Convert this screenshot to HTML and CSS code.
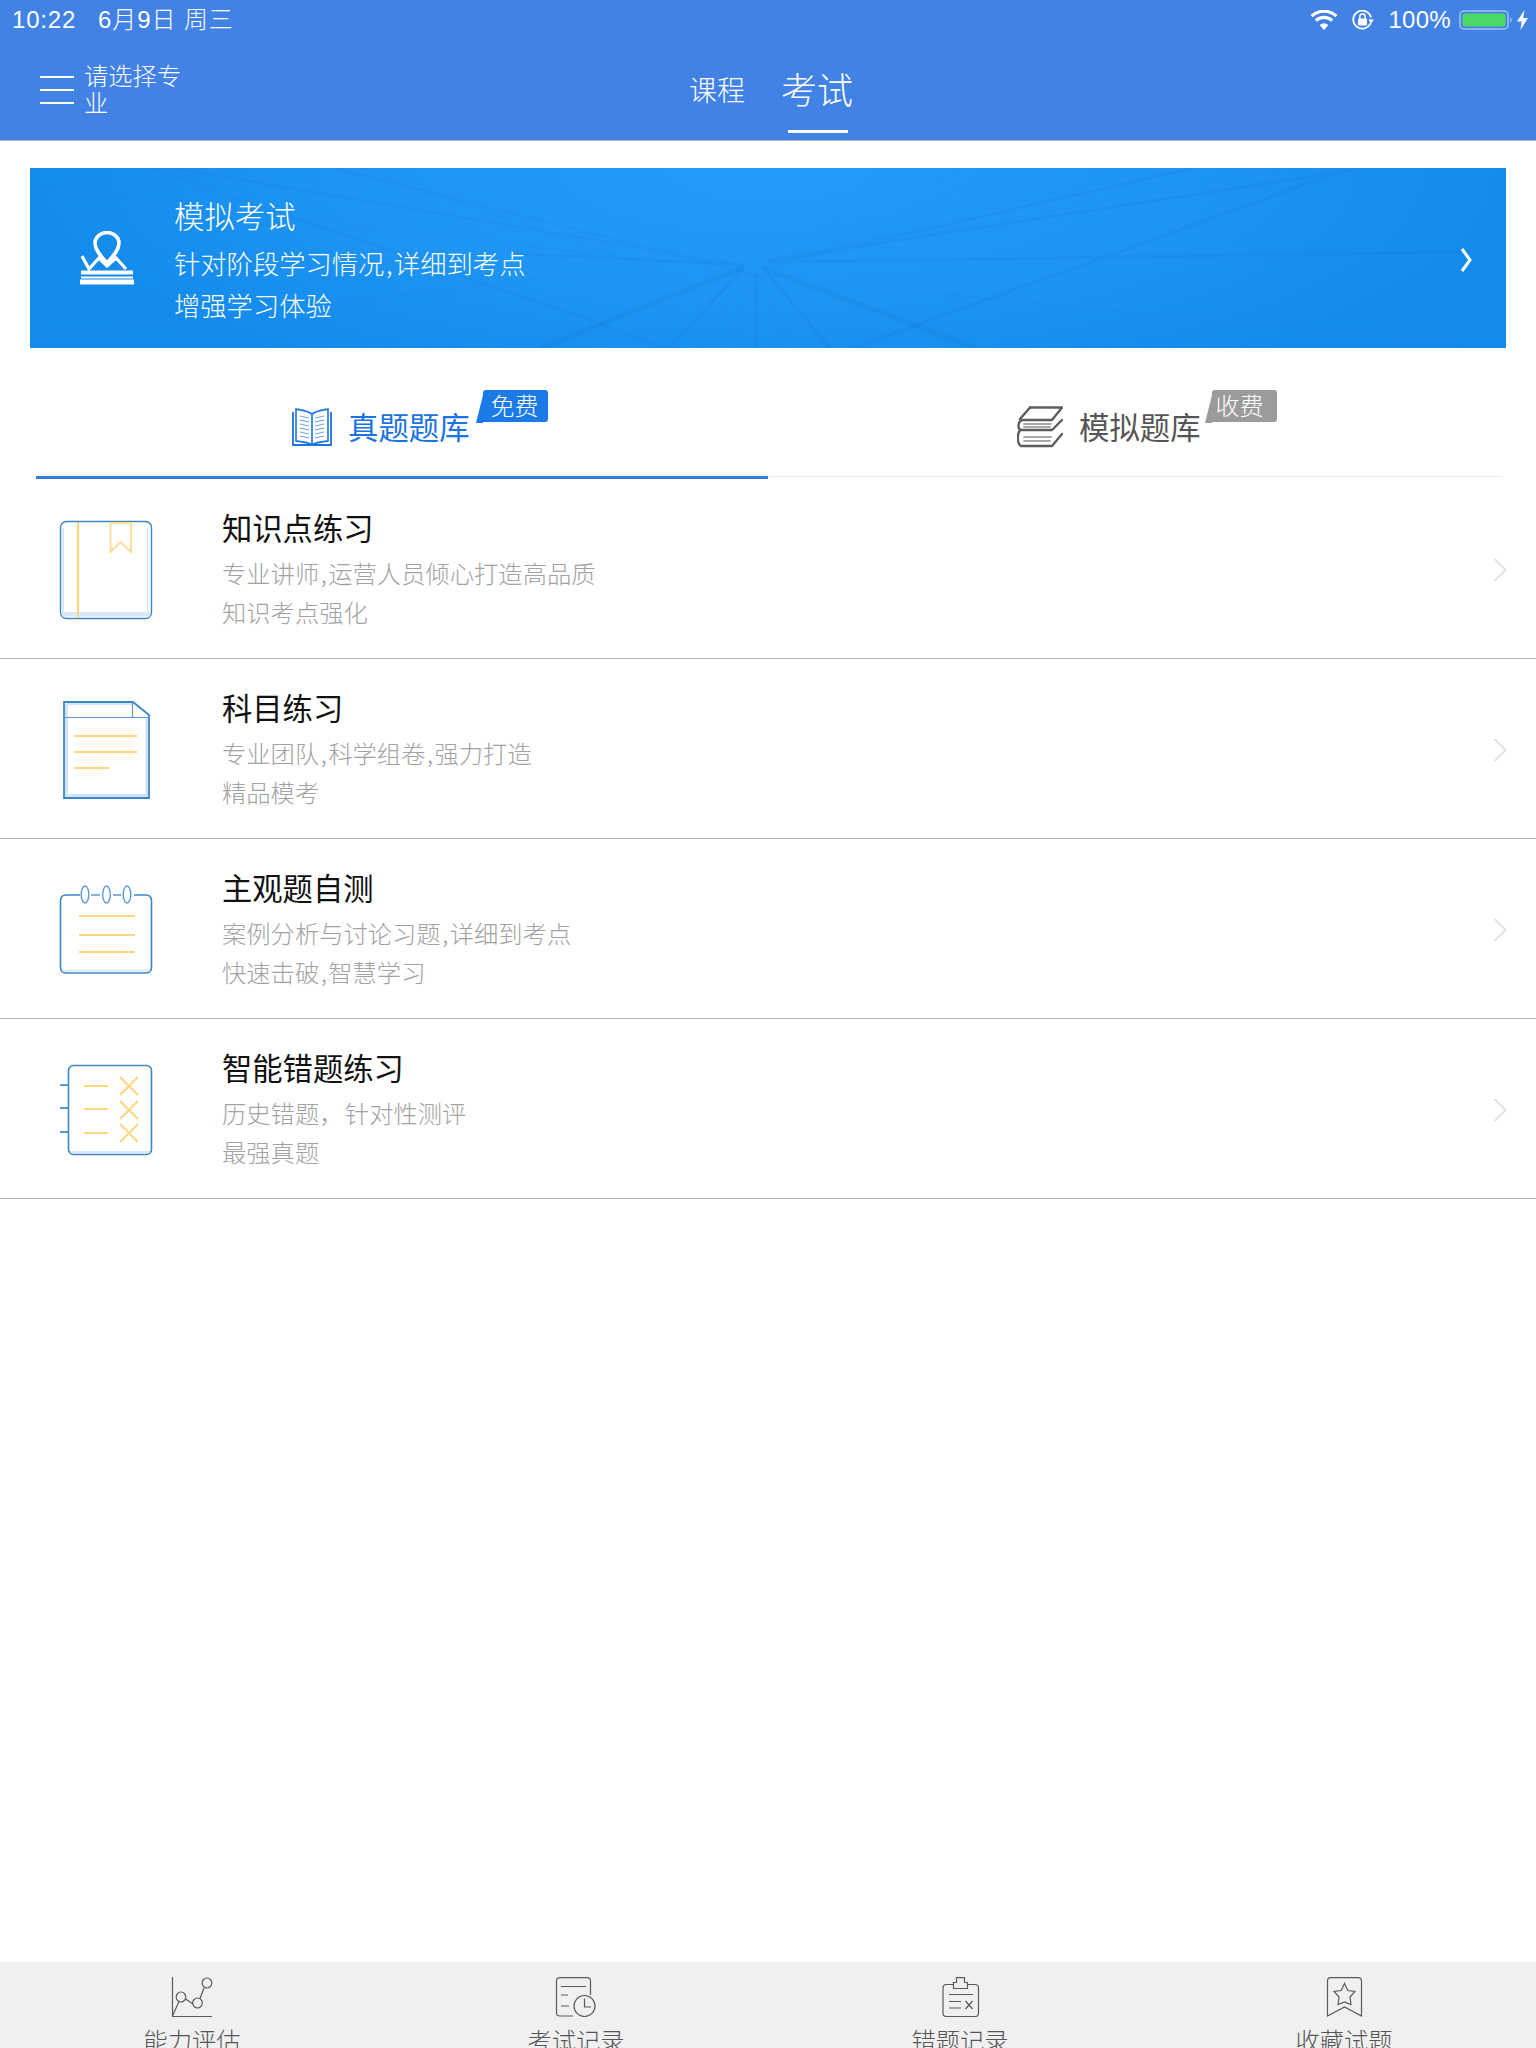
FILE: index.html
```html
<!DOCTYPE html>
<html lang="zh-CN">
<head>
<meta charset="utf-8">
<title>考试</title>
<link rel="stylesheet" href="styles.css">
</head>
<body>
<div class="app">
  <header class="topbar">
    <div class="status">
      <div class="status-left"><span class="time">10:22</span><span class="date">6月9日 周三</span></div>
      <div class="status-right">
        <svg class="wifi" viewBox="0 0 28 20"><path d="M14 20 L9.6 15 A7 7 0 0 1 18.4 15Z" fill="#fff"/><path d="M5.8 10.6 A12 12 0 0 1 22.2 10.6" fill="none" stroke="#fff" stroke-width="3.2"/><path d="M1.6 6.2 A18 18 0 0 1 26.4 6.2" fill="none" stroke="#fff" stroke-width="3.2"/></svg>
        <svg class="lock" viewBox="0 0 22 20"><path d="M18.6 13 A9 9 0 1 1 19 7.5" fill="none" stroke="#fff" stroke-width="1.8"/><path d="M16.4 9.5 H22 L19 13.5Z" fill="#fff"/><rect x="6" y="8.6" width="9" height="7" rx="1" fill="#fff"/><path d="M7.8 9 V6.8 A2.7 2.7 0 0 1 13.2 6.8 V9" fill="none" stroke="#fff" stroke-width="1.5"/></svg>
        <span class="percent">100%</span>
        <svg class="battery" viewBox="0 0 53 20"><rect x="1" y="1" width="48" height="18" rx="4" fill="none" stroke="#8bb0ee" stroke-width="2"/><rect x="3.5" y="3.5" width="43" height="13" rx="2" fill="#4cd964"/><path d="M51 7 Q53 8 53 10 Q53 12 51 13Z" fill="#8bb0ee"/></svg>
        <svg class="bolt" viewBox="0 0 11 20"><path d="M7.5 0 L0 11.5 H4.6 L3.4 20 L11 8 H6.2Z" fill="#fff"/></svg>
      </div>
    </div>
    <nav class="nav">
      <div class="nav-left">
        <span class="menu-icon"><i></i><i></i><i></i></span>
        <span class="major">请选择专业</span>
      </div>
      <div class="nav-tabs">
        <span class="nav-tab">课程</span>
        <span class="nav-tab active">考试</span>
      </div>
    </nav>
  </header>

  <section class="banner">
    <svg class="banner-art" viewBox="0 0 1476 180" preserveAspectRatio="none">
      <g fill="none" stroke="#0b6fc9">
        <path d="M142 0 L700 95 M303 0 L730 108 M120 0 L568 155 L634 180" stroke-opacity=".09" stroke-width="2"/>
        <path d="M480 85 L714 97 M738 94 L1440 84 M738 92 L1324 2 M823 180 L1315 2 M748 95 L1164 0" stroke-opacity=".1" stroke-width="3"/>
        <path d="M511 180 L714 99 M946 180 L733 100" stroke-opacity=".14" stroke-width="5"/>
        <path d="M726 107 V180 M714 99 L640 180 M733 100 L800 180" stroke-opacity=".1" stroke-width="3"/>
        <path d="M748 95 L880 0 M748 95 L930 0 M748 95 L980 0 M748 95 L1030 0 M748 95 L1080 0 M748 95 L1120 0 M748 95 L1250 0 M720 105 L670 180 M726 105 L700 180 M730 105 L760 180 M640 95 L0 20 M650 110 L330 0 M850 120 L1476 180 M600 100 L0 170" stroke-opacity=".05" stroke-width="1.5"/>
      </g>
    </svg>
    <svg class="banner-icon" viewBox="0 0 54 54">
      <path d="M27 32 C22 26 15 20 15 12 A12 10.500 0 0 1 39 12 C39 20 32 26 27 32Z" fill="none" stroke="#fff" stroke-width="3.600"/>
      <path d="M2 25 L9 38 L19 27 L27 35 L36 27 L46 38" fill="none" stroke="#fff" stroke-width="3.200"/>
      <path d="M1 41.500 H53" stroke="#fff" stroke-width="4"/>
      <path d="M1 46.500 H53" stroke="#fff" stroke-width="2"/>
      <path d="M0 51 H54" stroke="#fff" stroke-width="5"/>
    </svg>
    <div class="banner-text">
      <h2 class="banner-title">模拟考试</h2>
      <p class="banner-line">针对阶段学习情况<span class="comma">,</span>详细到考点</p>
      <p class="banner-line">增强学习体验</p>
    </div>
    <svg class="banner-arrow" viewBox="0 0 14 24"><path d="M3 1 L11 12 L3 23" fill="none" stroke="#fff" stroke-width="3"/></svg>
  </section>

  <div class="bank-tabs">
    <div class="bank-tab current">
      <svg class="bank-icon-a" viewBox="0 0 40 38" fill="none" stroke="#1a73e0"><path d="M1 4 V37 H39 V4" stroke-width="1.8"/><path d="M20 6 C16 3 9 2 4 1 V33 C9 33.500 16 34 20 37 C24 34 31 33.500 36 33 V1 C31 2 24 3 20 6Z M20 6 V37" stroke-width="1.6" fill="#fff"/><path d="M8 8 L17 10 M8 12 L17 14 M8 16 L17 18 M8 20 L17 22 M8 24 L17 26 M8 28 L17 30 M32 8 L23 10 M32 12 L23 14 M32 16 L23 18 M32 20 L23 22 M32 24 L23 26 M32 28 L23 30" stroke-width="1" stroke-opacity=".65"/></svg>
      <span class="bank-label">真题题库<span class="badge free">免费</span></span>
    </div>
    <div class="bank-tab other">
      <svg class="bank-icon-b" viewBox="0 0 46 42" fill="none" stroke="#5d5d5d" stroke-width="2.4" stroke-linecap="round" stroke-linejoin="round"><path d="M13 1.500 H45 L35 14 H6 C1 14 0 23 4 24 H35 L45 14"/><path d="M13 1.500 L3 13"/><path d="M3 24 C0 28 0 38 4 40 H35 L45 28"/><path d="M7 18 H34 M7 21 H33 M7 31 H34 M7 35 H33" stroke="#a8a8a8" stroke-width="1.800"/></svg>
      <span class="bank-label">模拟题库<span class="badge paid">收费</span></span>
    </div>
  </div>

  <ul class="rows">
    <li class="row">
      <svg class="row-icon" viewBox="0 0 100 110" fill="none">
        <rect x="4.500" y="7.500" width="91" height="97" rx="6" fill="#fff" stroke="#3d86c6" stroke-width="1.400"/>
        <path d="M6 102.500 H94 V98 H92.500 V14 H91 V98 H8 V14 H6Z" fill="#d8eafa" stroke="none"/>
        <path d="M22 8 V104" stroke="#fdd67e" stroke-width="2.200"/>
        <path d="M54.500 9 H75 V38 L64.500 28 L54.500 38Z" stroke="#fddc94" stroke-width="1.800"/>
      </svg>
      <div class="row-text"><h3 class="row-title">知识点练习</h3><p class="row-sub">专业讲师<span class="comma">,</span>运营人员倾心打造高品质</p><p class="row-sub">知识考点强化</p></div>
      <svg class="row-arrow" viewBox="0 0 14 24"><path d="M1.500 1 L12.500 12 L1.500 23" fill="none" stroke="#dcdcdc" stroke-width="1.600"/></svg>
    </li>
    <li class="row">
      <svg class="row-icon" viewBox="0 0 100 110" fill="none">
        <path d="M10.500 9.500 H76 M10.500 10 V101.500 H91 V24" stroke="#d0e5f9" stroke-width="3"/>
        <path d="M8 8 H77 L93 21 V104 H8Z" stroke="#3d86c6" stroke-width="1.800"/>
        <path d="M8 23.500 H93 M76.500 8 V23.500" stroke="#5b9bd5" stroke-width="1.200"/>
        <path d="M18 42 H81 M18 58 H81 M18 74 H53" stroke="#fdd67e" stroke-width="2"/>
      </svg>
      <div class="row-text"><h3 class="row-title">科目练习</h3><p class="row-sub">专业团队<span class="comma">,</span>科学组卷<span class="comma">,</span>强力打造</p><p class="row-sub">精品模考</p></div>
      <svg class="row-arrow" viewBox="0 0 14 24"><path d="M1.500 1 L12.500 12 L1.500 23" fill="none" stroke="#dcdcdc" stroke-width="1.600"/></svg>
    </li>
    <li class="row">
      <svg class="row-icon" viewBox="0 0 100 110" fill="none">
        <path d="M24 21 H10 Q4.500 21 4.500 27 V93 Q4.500 99 10 99 H90 Q95.500 99 95.500 93 V27 Q95.500 21 90 21 H78" stroke="#3d86c6" stroke-width="1.600"/>
        <path d="M6 96.500 H94" stroke="#d8eafa" stroke-width="2"/>
        <ellipse cx="29" cy="20.500" rx="3.800" ry="8.500" stroke="#5b9bd5" stroke-width="1.400"/>
        <ellipse cx="50.500" cy="20.500" rx="3.800" ry="8.500" stroke="#5b9bd5" stroke-width="1.400"/>
        <ellipse cx="71" cy="20.500" rx="3.800" ry="8.500" stroke="#5b9bd5" stroke-width="1.400"/>
        <path d="M35 21 H44 M57 21 H65" stroke="#5b9bd5" stroke-width="1.400"/>
        <path d="M23 42 H79 M23 61 H79 M23 78 H79" stroke="#fdd67e" stroke-width="2"/>
      </svg>
      <div class="row-text"><h3 class="row-title">主观题自测</h3><p class="row-sub">案例分析与讨论习题<span class="comma">,</span>详细到考点</p><p class="row-sub">快速击破<span class="comma">,</span>智慧学习</p></div>
      <svg class="row-arrow" viewBox="0 0 14 24"><path d="M1.500 1 L12.500 12 L1.500 23" fill="none" stroke="#dcdcdc" stroke-width="1.600"/></svg>
    </li>
    <li class="row">
      <svg class="row-icon" viewBox="0 0 100 110" fill="none">
        <rect x="12.500" y="11.500" width="83" height="89" rx="5" stroke="#3d86c6" stroke-width="1.600"/>
        <path d="M14 98 H94" stroke="#d8eafa" stroke-width="2"/>
        <path d="M4 31 H12 M4 54 H12 M4 78 H12" stroke="#5b9bd5" stroke-width="1.800"/>
        <path d="M28 32 H52 M28 55 H52 M28 79 H52" stroke="#fdd67e" stroke-width="2"/>
        <path d="M64 23 L82 41 M82 23 L64 41 M64 47 L82 65 M82 47 L64 65 M64 70 L82 88 M82 70 L64 88" stroke="#fdd67e" stroke-width="2"/>
      </svg>
      <div class="row-text"><h3 class="row-title">智能错题练习</h3><p class="row-sub">历史错题， 针对性测评</p><p class="row-sub">最强真题</p></div>
      <svg class="row-arrow" viewBox="0 0 14 24"><path d="M1.500 1 L12.500 12 L1.500 23" fill="none" stroke="#dcdcdc" stroke-width="1.600"/></svg>
    </li>
  </ul>

  <div class="spacer"></div>

  <footer class="tabbar">
    <div class="tab-item">
      <svg class="tab-icon" viewBox="0 0 48 40" fill="none" stroke="#5a5a5a" stroke-width="1.200"><path d="M4.500 0 V39.500 H44"/><path d="M4.500 39 L11 24.500 M17.500 22 L25 27 M32 21.500 L36 11"/><ellipse cx="13" cy="20" rx="4.800" ry="5"/><ellipse cx="29.500" cy="26" rx="4.800" ry="5"/><ellipse cx="39" cy="6" rx="4.800" ry="5"/></svg>
      <span class="tab-label">能力评估</span>
    </div>
    <div class="tab-item">
      <svg class="tab-icon" viewBox="0 0 48 40" fill="none" stroke="#5a5a5a" stroke-width="1.200"><path d="M21 39 H8 Q4.500 39 4.500 35.500 V4 Q4.500 .6 8 .6 H35 Q38.500 .6 38.500 4 V18"/><path d="M9 9.500 H34 M9 18 H16 M9 29 H17"/><circle cx="32.500" cy="29" r="10.500"/><path d="M32.500 21.500 V30 H39"/></svg>
      <span class="tab-label">考试记录</span>
    </div>
    <div class="tab-item">
      <svg class="tab-icon" viewBox="0 0 48 40" fill="none" stroke="#5a5a5a" stroke-width="1.200"><path d="M17.500 7.500 H10.500 Q7 7.500 7 11 V36 Q7 39.500 10.500 39.500 H39 Q42.500 39.500 42.500 36 V11 Q42.500 7.500 39 7.500 H31.500"/><path d="M17.500 11.500 V5.500 H20.500 V.6 H28.500 V5.500 H31.500 V11.500Z"/><path d="M13 17.500 H37 M13 24.500 H25 M13 31 H25 M29.500 24 L36.500 32 M36.500 24 L29.500 32"/></svg>
      <span class="tab-label">错题记录</span>
    </div>
    <div class="tab-item">
      <svg class="tab-icon" viewBox="0 0 48 40" fill="none" stroke="#5a5a5a" stroke-width="1.200"><path d="M7.500 39 V4 Q7.500 .6 11 .6 H38 Q41.500 .6 41.500 4 V39 L24.500 30 Z"/><path d="M24.500 6.500 L27.800 13.500 L35 14.500 L30 20 L31 27.500 L24.500 25 L18 27.500 L19 20 L14 14.500 L21.200 13.500Z"/></svg>
      <span class="tab-label">收藏试题</span>
    </div>
  </footer>
</div>
</body>
</html>
```

FILE: styles.css
```css
* { box-sizing: border-box; }
html, body { margin: 0; padding: 0; background: #fff; }
body { font-family: "Noto Sans CJK SC", "Noto Sans", sans-serif; font-weight: 300; }
h2, h3, p, ul { margin: 0; padding: 0; font-weight: 300; }
ul { list-style: none; }
.comma { letter-spacing: 1.5px; padding-left: 1.5px; }

.app { width: 1536px; height: 2048px; display: flex; flex-direction: column; overflow: hidden; }

.topbar { height: 141px; background: #4182e4; border-bottom: 1px solid #b4b8c0; color: #fff; flex: none; }
.status { height: 40px; display: flex; justify-content: space-between; align-items: center; padding: 0 8px 0 12px; font-family: "Liberation Sans", "Noto Sans CJK SC", sans-serif; font-size: 24px; line-height: 28px; font-weight: 400; }
.status-left { display: flex; align-items: baseline; }
.time { letter-spacing: .8px; }
.date { margin-left: 22px; letter-spacing: .9px; font-weight: 300; }
.status-right { display: flex; align-items: center; }
.wifi { width: 28px; height: 20px; }
.lock { width: 22px; height: 20px; margin-left: 14px; }
.percent { margin-left: 14px; letter-spacing: .3px; }
.battery { width: 53px; height: 20px; margin-left: 8px; }
.bolt { width: 11px; height: 20px; margin-left: 5px; }

.nav { height: 100px; display: flex; align-items: stretch; }
.nav-left { flex: 0 0 689px; padding-left: 40px; display: flex; align-items: center; }
.menu-icon { width: 34px; display: flex; flex-direction: column; gap: 11px; margin-right: 10px; }
.menu-icon i { display: block; height: 2px; background: #fff; }
.major { width: 98px; font-size: 24.3px; line-height: 27px; margin-bottom: 5px; }
.nav-tabs { display: flex; gap: 36px; }
.nav-tab { font-size: 28px; display: flex; align-items: center; position: relative; padding-bottom: 3px; }
.nav-tab.active { font-size: 36px; padding-bottom: 4px; }
.nav-tab.active::after { content: ""; position: absolute; left: 7px; right: 5px; bottom: 7px; height: 3px; background: #fff; }

.banner { margin: 27px 30px 0; height: 180px; flex: none; position: relative; display: flex; align-items: flex-start; color: #fff; overflow: hidden;
  background: radial-gradient(ellipse 760px 240px at 50% 0, #249cfa 0%, #1e94f3 55%, #148aea 100%); }
.banner-art { position: absolute; left: 0; top: 0; width: 100%; height: 100%; filter: blur(.7px); }
.banner-icon { position: relative; width: 54px; height: 54px; margin: 63px 40px 0 50px; flex: none; }
.banner-text { position: relative; padding-top: 26px; flex: 1; }
.banner-title { font-size: 30.4px; line-height: 42px; margin-bottom: 6px; }
.banner-line { font-size: 26.3px; line-height: 42px; }
.banner-arrow { position: relative; width: 14px; height: 24px; margin: 80px 33px 0 0; flex: none; }

.bank-tabs { height: 131px; margin: 0 34px 0 36px; display: flex; align-items: flex-start; flex: none; }
.bank-tab { width: 50%; display: flex; align-items: center; padding-top: 27px; color: #555; }
.bank-tab.current { height: 131px; border-bottom: 3px solid #2f7ed8; padding-left: 256px; color: #1a73e0; flex: 0 0 732px; }
.bank-tab.other { height: 129px; border-bottom: 1px solid #eeeeee; padding-left: 249px; flex: 0 0 734px; }
.bank-icon-a { width: 40px; height: 38px; margin-right: 16px; margin-top: 3px; }
.bank-icon-b { width: 46px; height: 42px; margin-right: 16px; margin-top: 3px; }
.bank-label { font-size: 30.4px; font-weight: 400; line-height: 40px; position: relative; white-space: nowrap; }
.badge { position: absolute; top: -16px; width: 65px; height: 32px; border-radius: 3px 3px 3px 0; font-size: 24px; font-weight: 300; line-height: 30px; color: #fff; }
.badge::before { content: ""; position: absolute; left: -7px; bottom: -1px; width: 0; height: 0; border-bottom: 28px solid transparent; border-left: 7px solid transparent; }
.badge.free { left: calc(100% + 13px); background: #1a7be8; padding-left: 8px; }
.badge.free::before { border-bottom-color: #1a7be8; }
.badge.paid { left: calc(100% + 11px); background: #9b9b9b; padding-left: 4px; }
.badge.paid::before { border-bottom-color: #9b9b9b; }

.rows { flex: none; }
.row { height: 180px; border-bottom: 1px solid #b0b0b0; display: flex; align-items: flex-start; padding-left: 56px; }
.row-icon { width: 100px; height: 110px; margin: 35px 66px 0 0; flex: none; }
.row-text { flex: 1; padding-top: 29px; }
.row-title { font-size: 30.3px; font-weight: 400; line-height: 38px; color: #111; margin-bottom: 7px; }
.row-sub { font-size: 24.3px; line-height: 39px; color: #a2a2a2; word-spacing: -4px; }
.row-arrow { width: 14px; height: 24px; margin: 79px 29px 0 0; flex: none; }

.spacer { flex: 1; }

.tabbar { height: 86px; flex: none; background: #f0f0f0; display: grid; grid-template-columns: repeat(4, 1fr); overflow: hidden; }
.tab-item { display: flex; flex-direction: column; align-items: center; padding-top: 15px; }
.tab-icon { width: 48px; height: 40px; flex: none; }
.tab-label { font-size: 24.3px; line-height: 34px; margin-top: 6px; color: #555; white-space: nowrap; }
```
